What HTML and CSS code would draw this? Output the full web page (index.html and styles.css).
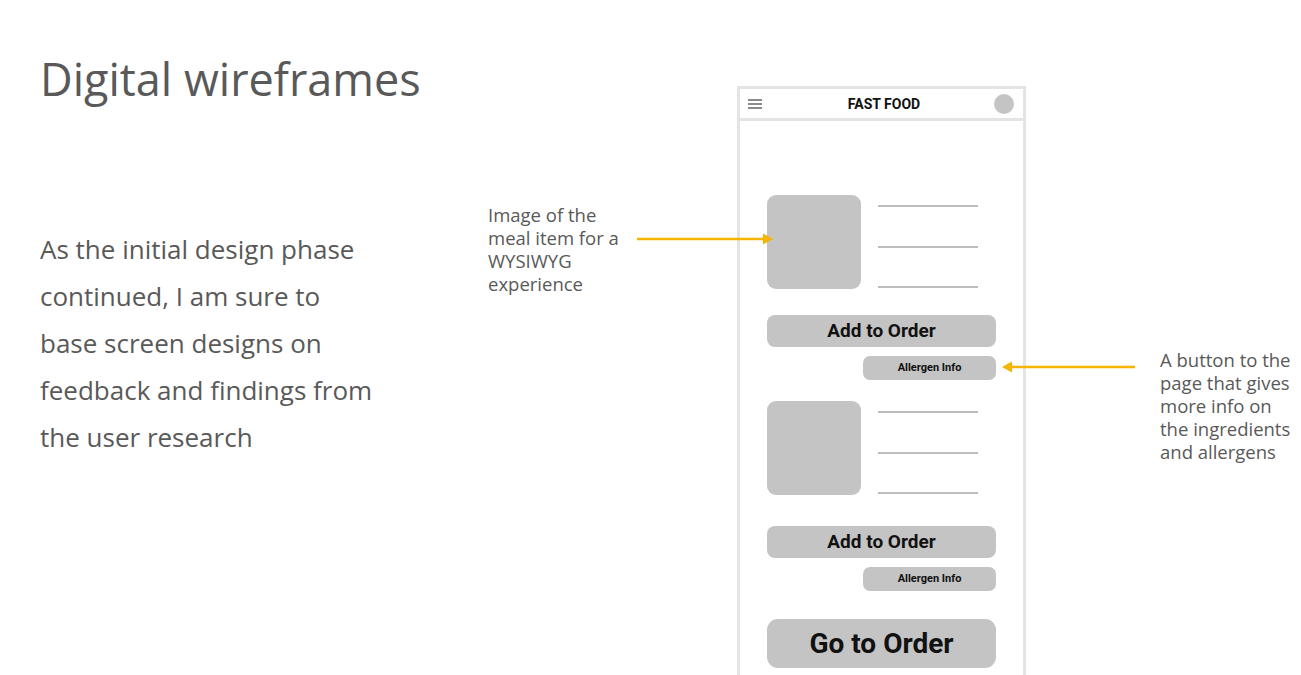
FILE: index.html
```html
<!DOCTYPE html>
<html>
<head>
<meta charset="utf-8">
<link rel="stylesheet" href="styles.css">
</head>
<body>
<div class="slide">
  <div class="left">
    <h1 class="title">Digital wireframes</h1>
    <p class="lead">As the initial design phase continued, I am sure to base screen designs on feedback and findings from the user research</p>
  </div>
  <div class="note note-left">Image of the<br>meal item for a<br>WYSIWYG<br>experience</div>
  <div class="phone">
    <div class="bar">
      <svg class="menu" width="14" height="10" viewBox="0 0 14 10"><path d="M0 1h14M0 5h14M0 9h14" stroke="#666" stroke-width="1.4"/></svg>
      <span class="brand">FAST FOOD</span>
      <span class="avatar"></span>
    </div>
    <div class="content">
      <div class="item item-first">
        <div class="thumb"></div>
        <div class="lines"><span></span><span></span><span></span></div>
      </div>
      <div class="btn add add-first">Add to Order</div>
      <div class="btn allergen">Allergen Info</div>
      <div class="item item-second">
        <div class="thumb"></div>
        <div class="lines"><span></span><span></span><span></span></div>
      </div>
      <div class="btn add add-second">Add to Order</div>
      <div class="btn allergen">Allergen Info</div>
      <div class="btn go">Go to Order</div>
    </div>
  </div>
  <div class="note note-right">A button to the<br>page that gives<br>more info on<br>the ingredients<br>and allergens</div>
  <svg class="arrow arrow-left" width="140" height="14" viewBox="0 0 140 14"><path d="M0 7h128" stroke="#f4b400" stroke-width="2.5"/><path d="M126 1.5L136 7L126 12.5Z" fill="#f4b400"/></svg>
  <svg class="arrow arrow-right" width="134" height="14" viewBox="0 0 134 14"><path d="M10 7h124" stroke="#f4b400" stroke-width="2.5"/><path d="M11 1.5L1 7L11 12.5Z" fill="#f4b400"/></svg>
</div>
</body>
</html>
```

FILE: styles.css
```css
* { box-sizing: border-box; }
html, body { margin: 0; padding: 0; background: #fff; }
.slide {
  position: relative;
  width: 1301px;
  height: 675px;
  overflow: hidden;
  display: flex;
  align-items: flex-start;
  font-family: "Open Sans", "Liberation Sans", sans-serif;
  color: #595959;
}
.left {
  width: 488px;
  padding-left: 40px;
  flex-shrink: 0;
}
.title {
  margin: 49px 0 0;
  font-size: 45px;
  font-weight: 400;
  line-height: 60px;
  color: #595959;
}
.lead {
  margin: 117px 0 0;
  font-size: 26px;
  line-height: 47px;
  width: 338px;
}
.note {
  font-size: 18.5px;
  line-height: 23px;
  flex-shrink: 0;
  white-space: nowrap;
}
.note-left {
  width: 150px;
  margin-top: 203px;
}
.phone {
  margin-top: 86px;
  margin-left: 99px;
  width: 289px;
  height: 600px;
  border: 3px solid #e4e4e4;
  border-bottom: none;
  flex-shrink: 0;
  font-family: Roboto, "Liberation Sans", sans-serif;
  color: #111;
}
.bar {
  height: 32px;
  border-bottom: 3px solid #e4e4e4;
  display: flex;
  align-items: center;
  justify-content: space-between;
  padding: 0 9px 0 8px;
}
.menu { display: block; }
.brand {
  font-weight: 700;
  font-size: 14px;
  margin-left: 12px;
}
.avatar {
  width: 20px;
  height: 20px;
  border-radius: 50%;
  background: #c4c4c4;
}
.content {
  padding-left: 27px;
  width: 256px;
  display: flex;
  flex-direction: column;
}
.item {
  display: flex;
  gap: 17px;
}
.item-first { margin-top: 74px; }
.item-second { margin-top: 21px; }
.thumb {
  width: 94px;
  height: 94px;
  border-radius: 9px;
  background: #c4c4c4;
}
.lines {
  display: flex;
  flex-direction: column;
  justify-content: space-between;
  padding: 10px 0 0;
  height: 93px;
}
.lines span {
  display: block;
  width: 100px;
  height: 2px;
  background: #bdbdbd;
}
.btn {
  background: #c4c4c4;
  border-radius: 8px;
  font-weight: 700;
  text-align: center;
}
.add {
  height: 32px;
  font-size: 19px;
  line-height: 32px;
}
.add-first { margin-top: 26px; }
.add-second { margin-top: 31px; }
.allergen {
  margin-top: 9px;
  align-self: flex-end;
  width: 133px;
  height: 24px;
  font-size: 11px;
  line-height: 24px;
  border-radius: 7px;
}
.go {
  margin-top: 28px;
  height: 49px;
  font-size: 28px;
  line-height: 49px;
  border-radius: 11px;
}
.note-right {
  width: 141px;
  margin-top: 348px;
  margin-left: 134px;
}
.arrow { position: absolute; display: block; }
.arrow-left { left: 637px; top: 232px; }
.arrow-right { left: 1001px; top: 360px; }
```
